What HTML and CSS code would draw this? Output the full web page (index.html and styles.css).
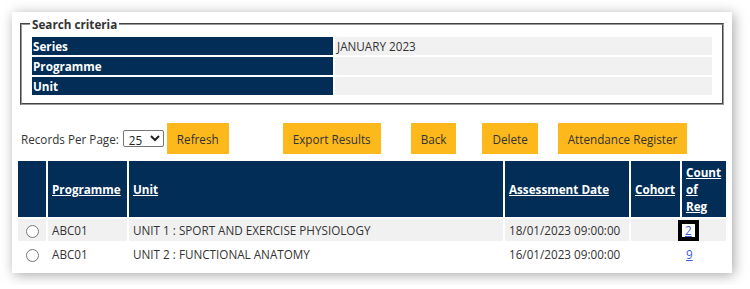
FILE: index.html
```html
<!DOCTYPE html>
<html lang="en">
<head>
  <meta charset="UTF-8" />
  <title>Assessment Search</title>
  <link rel="stylesheet" href="styles.css">
</head>
<body>
  <div class="card">
    <fieldset class="criteria">
      <legend>Search criteria</legend>
      <table class="criteria-table">
        <tr><th>Series</th><td>JANUARY 2023</td></tr>
        <tr><th>Programme</th><td></td></tr>
        <tr><th>Unit</th><td></td></tr>
      </table>
    </fieldset>

    <div class="toolbar">
      <label class="per-page">Records Per Page:
        <select>
          <option>25</option>
          <option>50</option>
          <option>100</option>
        </select>
      </label>
      <button class="btn btn-refresh">Refresh</button>
      <button class="btn btn-export">Export Results</button>
      <button class="btn btn-back">Back</button>
      <button class="btn btn-delete">Delete</button>
      <button class="btn btn-register">Attendance Register</button>
    </div>

    <table class="results">
      <colgroup>
        <col class="c-select">
        <col class="c-programme">
        <col class="c-unit">
        <col class="c-date">
        <col class="c-cohort">
        <col class="c-count">
      </colgroup>
      <thead>
        <tr>
          <th></th>
          <th><a href="#">Programme</a></th>
          <th><a href="#">Unit</a></th>
          <th><a href="#">Assessment Date</a></th>
          <th><a href="#">Cohort</a></th>
          <th class="count-head"><a href="#">Count of Reg</a></th>
        </tr>
      </thead>
      <tbody>
        <tr class="alt">
          <td class="pick"><input type="radio" name="row"></td>
          <td>ABC01</td>
          <td>UNIT 1 : SPORT AND EXERCISE PHYSIOLOGY</td>
          <td>18/01/2023 09:00:00</td>
          <td></td>
          <td><a href="#" class="count focused">2</a></td>
        </tr>
        <tr>
          <td class="pick"><input type="radio" name="row"></td>
          <td>ABC01</td>
          <td>UNIT 2 : FUNCTIONAL ANATOMY</td>
          <td>16/01/2023 09:00:00</td>
          <td></td>
          <td><a href="#" class="count">9</a></td>
        </tr>
      </tbody>
    </table>
  </div>
</body>
</html>
```

FILE: styles.css
```css
body {
  margin: 0;
  padding: 12px;
  background: #fff;
  font-family: 'Open Sans', sans-serif;
  font-size: 11.7px;
  color: #333;
}
.card {
  width: 712px;
  padding: 4px 4px 6px;
  background: #fff;
  box-shadow: 2px 2px 12px rgba(0, 0, 0, 0.35);
}
.criteria {
  margin: 0 4px;
  padding: 3px 8px 6px;
  border: 2px groove #999;
}
.criteria legend {
  padding: 0 2px;
  font-weight: bold;
  line-height: 16px;
}
.criteria-table {
  width: 684px;
  border-spacing: 2px;
  table-layout: fixed;
}
.criteria-table th,
.criteria-table td {
  height: 18px;
  padding: 0 2px;
  line-height: 16px;
  text-align: left;
}
.criteria-table th {
  width: 298px;
  background: #012d56;
  color: #fff;
  padding-left: 1px;
}
.criteria-table td {
  background: #f1f1f1;
}
.toolbar {
  display: flex;
  align-items: center;
  margin-top: 18px;
  height: 31px;
}
.per-page {
  margin-left: 5px;
  display: flex;
  align-items: center;
}
.per-page select {
  width: 41px;
  height: 17px;
  margin-left: 4px;
  padding: 0 1px;
  font-family: inherit;
  font-size: 11.7px;
  color: #222;
  border: 1px solid #767676;
  border-radius: 2px;
  background: #fff;
}
.btn {
  height: 31px;
  padding: 0 10px;
  border: none;
  background: #fdb81c;
  font-family: inherit;
  font-size: 11.7px;
  color: #333;
}
.btn-refresh { margin-left: 3px; }
.btn-export { margin-left: 54px; }
.btn-back { margin-left: 30px; }
.btn-delete { margin-left: 26px; }
.btn-register { margin-left: 20px; }

.results {
  width: 100%;
  margin-top: 5px;
  border-spacing: 2px;
  table-layout: fixed;
}
.c-select { width: 28px; }
.c-programme { width: 79px; }
.c-unit { width: 374px; }
.c-date { width: 124px; }
.c-cohort { width: 49px; }
.c-count { width: 44px; }
.results th {
  background: #012d56;
  padding: 3px 4px 2px;
  line-height: 17px;
  text-align: left;
  vertical-align: middle;
}
.results th.count-head {
  padding-right: 7px;
}
.results th a {
  color: #fff;
  font-weight: bold;
}
.results td {
  padding: 3px 4px;
  line-height: 16px;
  white-space: nowrap;
}
.results .alt td {
  background: #f1f1f1;
}
.results .pick {
  text-align: center;
  padding: 0;
}
.pick input {
  margin: 0;
  width: 13px;
  height: 13px;
  vertical-align: middle;
}
.count {
  color: #3b5bdb;
}
.count.focused {
  display: inline-block;
  margin-left: -4px;
  padding: 0 3px;
  line-height: 13px;
  outline: 4px solid #000;
  background: #fff;
}
```
